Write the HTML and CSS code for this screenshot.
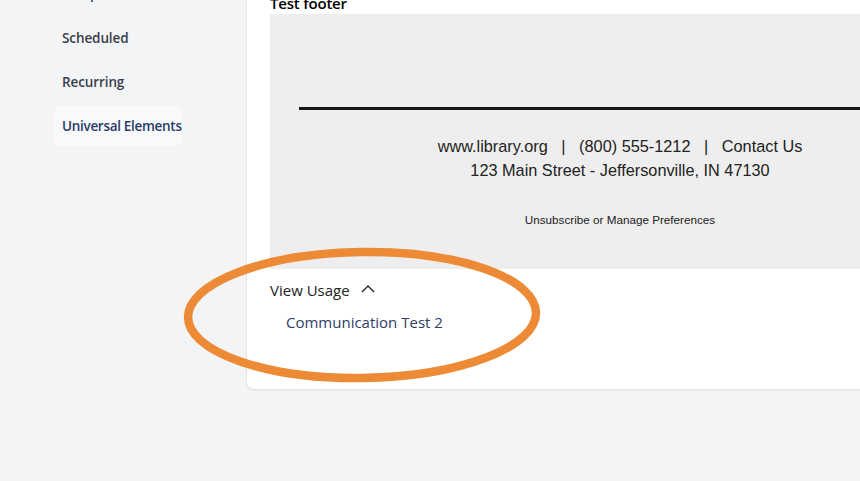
FILE: index.html
```html
<!DOCTYPE html>
<html>
<head>
<meta charset="utf-8">
<link rel="stylesheet" href="styles.css">
</head>
<body>
<div class="app">
  <aside class="sidebar">
    <nav class="nav">
      <a class="nav-item">Templates</a>
      <a class="nav-item">Scheduled</a>
      <a class="nav-item">Recurring</a>
      <a class="nav-item active">Universal Elements</a>
    </nav>
  </aside>
  <main class="main">
    <section class="card">
      <div class="field-label">Test footer</div>
      <div class="preview">
        <span class="corner-mark"></span>
        <div class="rule"></div>
        <div class="footer-lines">
          <p class="contact">www.library.org &nbsp; | &nbsp; (800) 555-1212 &nbsp; | &nbsp; Contact Us</p>
          <p class="contact">123 Main Street - Jeffersonville, IN 47130</p>
          <p class="unsub">Unsubscribe or Manage Preferences</p>
        </div>
      </div>
      <div class="usage-toggle">
        <span>View Usage</span>
        <svg class="chev" width="14" height="9" viewBox="0 0 14 9"><polyline points="1,8 7,2 13,8" fill="none" stroke="#222" stroke-width="1.4"/></svg>
      </div>
      <div class="usage-list">
        <a class="usage-link">Communication Test 2</a>
      </div>
    </section>
  </main>
</div>
<svg class="annotation" width="370" height="150" viewBox="0 0 370 150">
  <ellipse cx="179" cy="68" rx="174" ry="63" fill="none" stroke="#ec8a36" stroke-width="8.5" transform="rotate(-0.8 179 68)"/>
</svg>
</body>
</html>
```

FILE: styles.css
```css
* { box-sizing: border-box; }
html, body {
  margin: 0;
  padding: 0;
  background: #f3f4f6;
  width: 860px;
  height: 481px;
  overflow: hidden;
  font-family: "Open Sans", "Noto Sans", sans-serif;
}
.app {
  display: flex;
  align-items: flex-start;
}
.sidebar {
  width: 246px;
  flex: none;
}
.nav {
  display: flex;
  flex-direction: column;
  align-items: flex-start;
  gap: 4px;
  margin-top: -26px;
  padding-left: 54px;
}
.nav-item {
  display: flex;
  align-items: center;
  height: 40px;
  padding: 0 8px;
  font-size: 13.5px;
  font-weight: 600;
  color: #3a3f4a;
  border-radius: 6px;
  letter-spacing: -0.1px;
  white-space: nowrap;
}
.nav-item.active {
  color: #2b3a67;
  background: #f8f9fb;
  width: 128px;
  padding-right: 0;
  letter-spacing: -0.3px;
}
.main {
  flex: 1;
  min-width: 0;
}
.card {
  margin-top: -40px;
  width: 760px;
  background: #fff;
  border: 1px solid #e3e5e9;
  border-radius: 8px;
  padding: 0 0 57px 23px;
  box-shadow: 0 1px 2px rgba(0,0,0,0.04);
}
.field-label {
  height: 53px;
  display: flex;
  align-items: flex-end;
  padding-bottom: 1px;
  font-size: 15px;
  line-height: 20px;
  color: #000;
  font-weight: 600;
  letter-spacing: -0.2px;
}
.preview {
  position: relative;
  width: 700px;
  height: 255px;
  background: #eeeeee;
  padding: 93px 29px 0;
  font-family: "Liberation Sans", Arial, sans-serif;
  color: #222;
}
.corner-mark {
  position: absolute;
  left: 6px;
  top: -2px;
  width: 7px;
  height: 5px;
  border: 1px solid #f8f8f8;
  border-top: none;
  border-radius: 0 0 2px 2px;
}
.rule {
  height: 2.5px;
  background: #161616;
}
.footer-lines {
  text-align: center;
  padding-top: 24px;
}
.contact {
  margin: 0;
  font-size: 16.3px;
  line-height: 24px;
}
.unsub {
  margin: 31px 0 0;
  font-size: 11.7px;
  line-height: 14px;
}
.usage-toggle {
  display: flex;
  align-items: center;
  gap: 11px;
  margin-top: 11px;
  height: 20px;
  font-size: 15px;
  color: #222;
}
.chev { margin-top: -3px; }
.usage-list {
  margin-top: 12px;
  padding-left: 16px;
  height: 20px;
  display: flex;
  align-items: center;
}
.usage-link {
  font-size: 15px;
  color: #2f3d68;
}
.annotation {
  position: absolute;
  left: 183px;
  top: 247px;
  pointer-events: none;
}
```
